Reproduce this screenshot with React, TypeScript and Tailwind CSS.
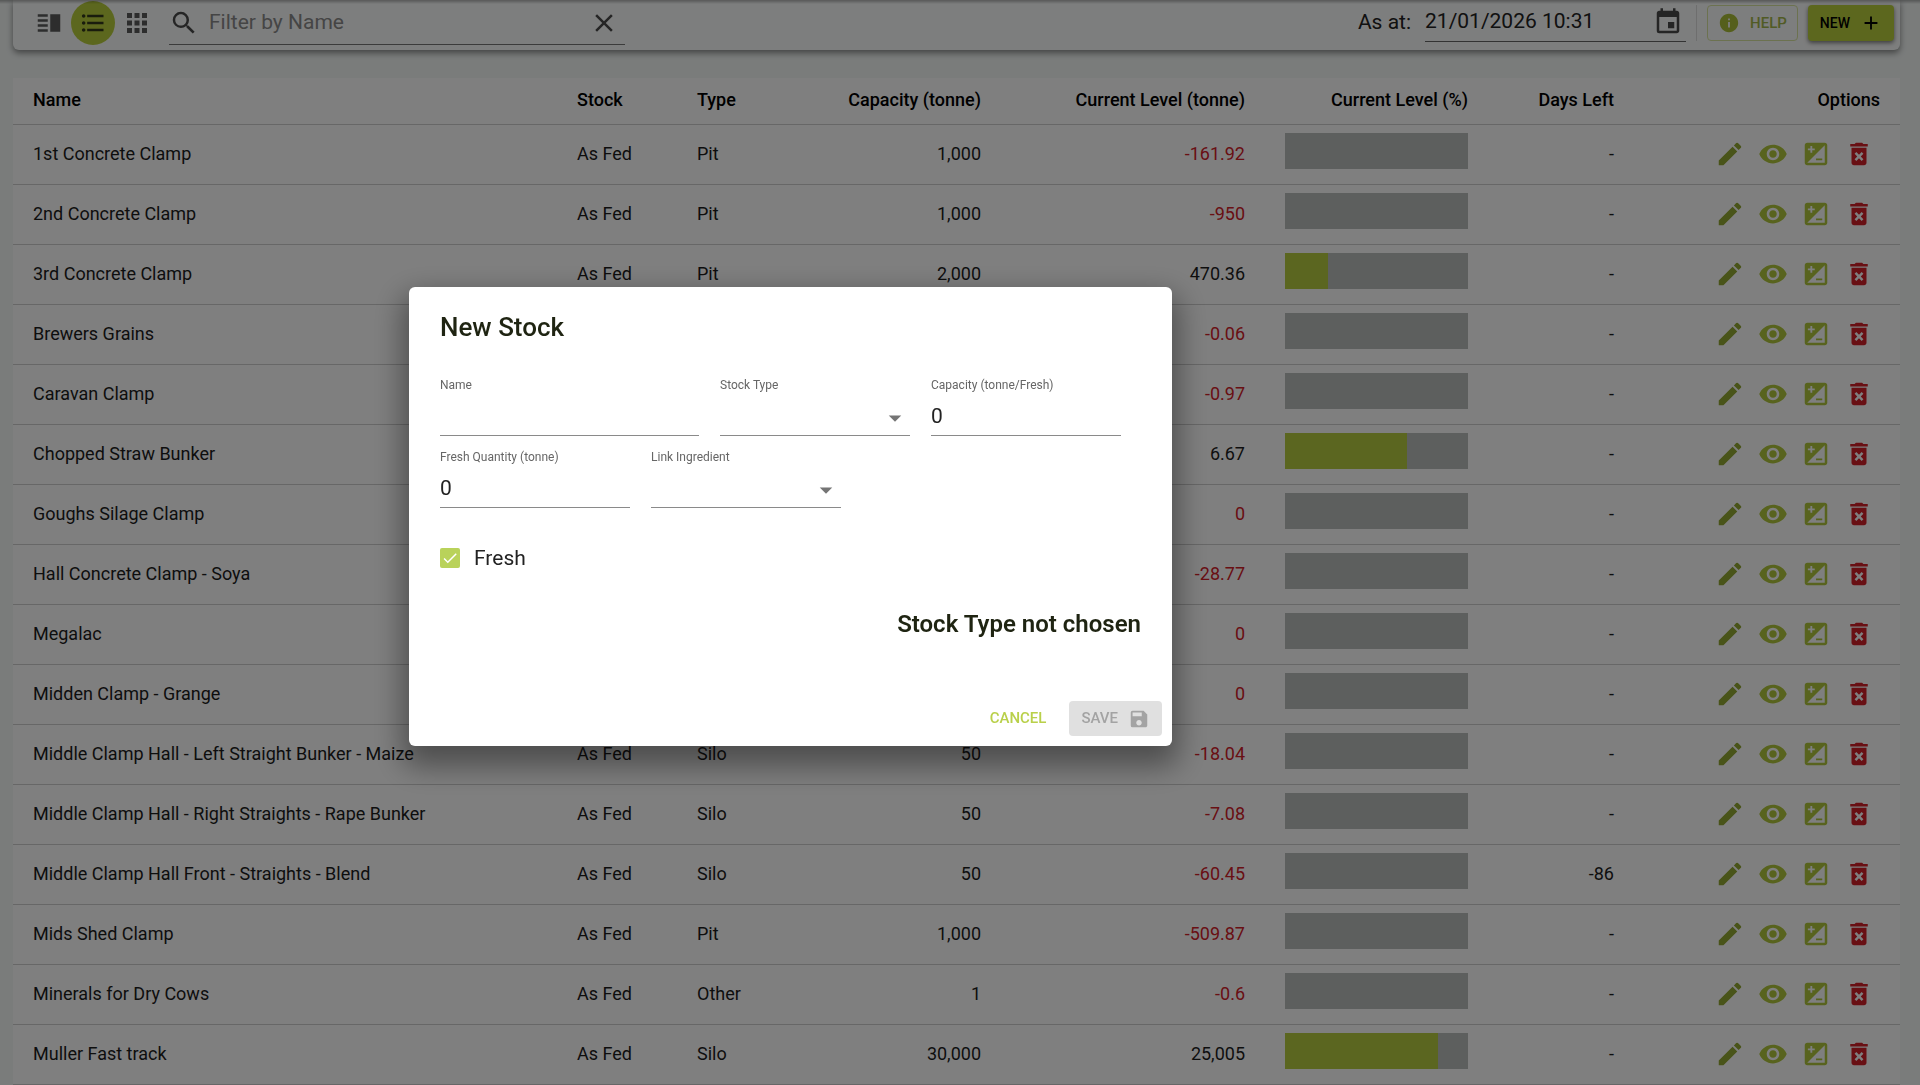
import {
  MdAdd,
  MdApps,
  MdArrowDropDown,
  MdCheck,
  MdClose,
  MdDeleteForever,
  MdEdit,
  MdEvent,
  MdFormatListBulleted,
  MdInfo,
  MdIso,
  MdSave,
  MdSearch,
  MdVerticalSplit,
  MdVisibility,
} from "react-icons/md";

interface StockRow {
  name: string;
  type: string;
  capacity: string;
  level: string;
  percent: number;
  daysLeft: string;
}

const rows: StockRow[] = [
  { name: "1st Concrete Clamp", type: "Pit", capacity: "1,000", level: "-161.92", percent: 0, daysLeft: "-" },
  { name: "2nd Concrete Clamp", type: "Pit", capacity: "1,000", level: "-950", percent: 0, daysLeft: "-" },
  { name: "3rd Concrete Clamp", type: "Pit", capacity: "2,000", level: "470.36", percent: 23.5, daysLeft: "-" },
  { name: "Brewers Grains", type: "Pit", capacity: "50", level: "-0.06", percent: 0, daysLeft: "-" },
  { name: "Caravan Clamp", type: "Pit", capacity: "1,000", level: "-0.97", percent: 0, daysLeft: "-" },
  { name: "Chopped Straw Bunker", type: "Pit", capacity: "10", level: "6.67", percent: 66.7, daysLeft: "-" },
  { name: "Goughs Silage Clamp", type: "Pit", capacity: "1,000", level: "0", percent: 0, daysLeft: "-" },
  { name: "Hall Concrete Clamp - Soya", type: "Pit", capacity: "50", level: "-28.77", percent: 0, daysLeft: "-" },
  { name: "Megalac", type: "Other", capacity: "1", level: "0", percent: 0, daysLeft: "-" },
  { name: "Midden Clamp - Grange", type: "Pit", capacity: "1,000", level: "0", percent: 0, daysLeft: "-" },
  { name: "Middle Clamp Hall - Left Straight Bunker - Maize", type: "Silo", capacity: "50", level: "-18.04", percent: 0, daysLeft: "-" },
  { name: "Middle Clamp Hall - Right Straights - Rape Bunker", type: "Silo", capacity: "50", level: "-7.08", percent: 0, daysLeft: "-" },
  { name: "Middle Clamp Hall Front - Straights - Blend", type: "Silo", capacity: "50", level: "-60.45", percent: 0, daysLeft: "-86" },
  { name: "Mids Shed Clamp", type: "Pit", capacity: "1,000", level: "-509.87", percent: 0, daysLeft: "-" },
  { name: "Minerals for Dry Cows", type: "Other", capacity: "1", level: "-0.6", percent: 0, daysLeft: "-" },
  { name: "Muller Fast track", type: "Silo", capacity: "30,000", level: "25,005", percent: 83.4, daysLeft: "-" },
];

const isShort = (level: string) => level.startsWith("-") || level === "0";

const Toolbar = () => (
  <header className="flex h-[50px] items-center rounded-b-md bg-[#fbfcfc] pt-1 pr-1.5 pb-2 pl-[14px] shadow-[0_3px_6px_rgba(0,0,0,0.45)]">
    <div className="flex items-center text-[#5a5a5a]">
      <button type="button" aria-label="Split view" className="flex size-[44px] items-center justify-center">
        <MdVerticalSplit className="size-[30px]" />
      </button>
      <button
        type="button"
        aria-label="List view"
        className="flex size-[44px] items-center justify-center rounded-full bg-[#b9cf3c] text-[#33391a]"
      >
        <MdFormatListBulleted className="size-7" />
      </button>
      <button type="button" aria-label="Grid view" className="flex size-[44px] items-center justify-center">
        <MdApps className="size-[30px]" />
      </button>
    </div>
    <div className="ml-2.5 flex h-[44px] w-[456px] items-center border-b border-[#777] text-[#4a4a4a]">
      <MdSearch className="size-[30px] shrink-0" />
      <input
        type="text"
        aria-label="Filter by Name"
        placeholder="Filter by Name"
        className="ml-2.5 min-w-0 flex-1 bg-transparent text-[21px] outline-none placeholder:text-[#8a8a8a]"
      />
      <button type="button" aria-label="Clear filter" className="mr-1.5">
        <MdClose className="size-[30px]" />
      </button>
    </div>
    <div className="ml-auto flex items-center">
      <label htmlFor="as-at" className="text-[21px] text-[#222]">
        As at:
      </label>
      <div className="mb-0.5 ml-3.5 flex h-10 w-[261px] items-center border-b border-[#666]">
        <input
          id="as-at"
          type="text"
          defaultValue="21/01/2026 10:31"
          className="min-w-0 flex-1 bg-transparent text-[21px] text-[#222] outline-none"
        />
        <button type="button" aria-label="Pick date" className="mr-[3px] text-[#4a4a4a]">
          <MdEvent className="size-[30px]" />
        </button>
      </div>
      <div className="mx-2.5 h-9 w-px bg-[#dcdcdc]" />
      <button
        type="button"
        className="flex h-9 items-center gap-2.5 rounded border border-[#d9e5a0] px-2.5 text-[15px] font-medium text-[#a3b74a]"
      >
        <MdInfo className="size-[22px] text-[#aabf38]" />
        HELP
      </button>
      <button
        type="button"
        className="ml-2.5 flex h-9 items-center gap-2.5 rounded bg-[#b9cf3c] px-3 text-sm font-medium text-black shadow-[0_2px_4px_rgba(0,0,0,0.5)]"
      >
        NEW
        <MdAdd className="size-[22px]" />
      </button>
    </div>
  </header>
);

const RowActions = ({ name }: { name: string }) => (
  <div className="flex justify-end gap-[13px] pr-1.5 text-[#b0c63c]">
    <button type="button" aria-label={`Edit ${name}`} className="text-[#93a832]">
      <MdEdit className="size-[30px]" />
    </button>
    <button type="button" aria-label={`View ${name}`}>
      <MdVisibility className="size-[30px]" />
    </button>
    <button type="button" aria-label={`Adjust ${name}`}>
      <MdIso className="size-[30px]" />
    </button>
    <button type="button" aria-label={`Delete ${name}`} className="text-[#d32029]">
      <MdDeleteForever className="size-[30px]" />
    </button>
  </div>
);

const StockTable = () => (
  <table className="mt-7 w-full table-fixed bg-white text-lg text-[#1c1c1c]">
    <thead>
      <tr className="h-[46px] border-b border-[#cfcfcf] text-left text-black [&>th]:px-5 [&>th]:pb-0.5 [&>th]:font-medium">
        <th>Name</th>
        <th className="w-[120px]">Stock</th>
        <th className="w-[102px]">Type</th>
        <th className="w-[222px] text-right">Capacity (tonne)</th>
        <th className="w-[264px] text-right">Current Level (tonne)</th>
        <th className="w-[223px] text-right">Current Level (%)</th>
        <th className="w-[146px] text-right">Days Left</th>
        <th className="w-[266px] text-right">Options</th>
      </tr>
    </thead>
    <tbody>
      {rows.map((row) => (
        <tr key={row.name} className="h-[60px] border-b border-[#cfcfcf] [&>td]:px-5">
          <td>{row.name}</td>
          <td>As Fed</td>
          <td>{row.type}</td>
          <td className="text-right">{row.capacity}</td>
          <td className={isShort(row.level) ? "text-right text-[#d32029]" : "text-right"}>{row.level}</td>
          <td>
            <div className="mb-1.5 h-9 bg-[#bbbfbd]">
              <div className="h-full bg-[#b6cd40]" style={{ width: `${row.percent}%` }} />
            </div>
          </td>
          <td className="text-right">{row.daysLeft}</td>
          <td>
            <RowActions name={row.name} />
          </td>
        </tr>
      ))}
    </tbody>
  </table>
);

interface FieldProps {
  id: string;
  label: string;
  value?: string;
  className: string;
}

const TextField = ({ id, label, value, className }: FieldProps) => (
  <div className={className}>
    <label htmlFor={id} className="block text-xs text-[#666]">
      {label}
    </label>
    <input
      id={id}
      type="text"
      defaultValue={value}
      className="block h-[43px] w-full border-b border-[#8a8a8a] bg-transparent pt-1 text-[21px] text-[#222] outline-none"
    />
  </div>
);

const SelectField = ({ id, label, className }: FieldProps) => (
  <div className={className}>
    <label htmlFor={id} className="block text-xs text-[#666]">
      {label}
    </label>
    <div className="relative">
      <select
        id={id}
        className="block h-[43px] w-full appearance-none border-b border-[#8a8a8a] bg-transparent text-[21px] outline-none"
      >
        <option value=""></option>
      </select>
      <MdArrowDropDown className="pointer-events-none absolute top-2.5 right-0 size-[30px] text-[#757575]" />
    </div>
  </div>
);

const NewStockDialog = () => (
  <div className="fixed inset-0 flex items-center justify-center bg-black/50 pr-[339px] pb-[52px]">
    <div
      role="dialog"
      aria-labelledby="dialog-title"
      className="w-[763px] rounded-md bg-white shadow-[0_14px_30px_6px_rgba(0,0,0,0.4)]"
    >
      <div className="px-[31px] pt-6">
        <h2 id="dialog-title" className="text-[26px] leading-8 font-medium text-[#1f2412]">
          New Stock
        </h2>
        <div className="mt-[34px] flex gap-[21px]">
          <TextField id="name" label="Name" className="w-[259px]" />
          <SelectField id="stock-type" label="Stock Type" className="w-[190px]" />
          <TextField id="capacity" label="Capacity (tonne/Fresh)" value="0" className="w-[190px]" />
        </div>
        <div className="mt-[13px] flex gap-[21px]">
          <TextField id="fresh-quantity" label="Fresh Quantity (tonne)" value="0" className="w-[190px]" />
          <SelectField id="link-ingredient" label="Link Ingredient" className="w-[190px]" />
        </div>
        <label className="mt-9 flex items-center gap-3.5 text-[21px] leading-7 text-[#222]">
          <span className="relative flex">
            <input
              type="checkbox"
              defaultChecked
              className="size-5 appearance-none rounded-xs bg-[#b9d25a]"
            />
            <MdCheck className="pointer-events-none absolute top-px left-px size-[18px] text-white" />
          </span>
          Fresh
        </label>
        <p className="mt-9 text-right text-2xl leading-8 font-semibold text-[#1f2412]">Stock Type not chosen</p>
      </div>
      <div className="mt-[61px] flex justify-end gap-[11px] px-2.5 pb-2.5">
        <button type="button" className="h-[35px] px-3 text-[15px] font-medium text-[#b9d04a]">
          CANCEL
        </button>
        <button
          type="button"
          disabled
          className="flex h-[35px] items-center gap-2.5 rounded bg-[#e0e0e0] px-3 text-[15px] font-medium text-[#a3a3a3]"
        >
          SAVE
          <MdSave className="size-[22px]" />
        </button>
      </div>
    </div>
  </div>
);

const App = () => (
  <div className="h-screen overflow-hidden bg-[#f4f8f7] pr-5 pl-[13px] font-['Roboto',sans-serif]">
    <Toolbar />
    <StockTable />
    <NewStockDialog />
    {/* shadow cast by the app bar above */}
    <div className="pointer-events-none fixed inset-x-0 top-0 h-1 bg-gradient-to-b from-black/30 to-transparent" />
  </div>
);

export default App;
